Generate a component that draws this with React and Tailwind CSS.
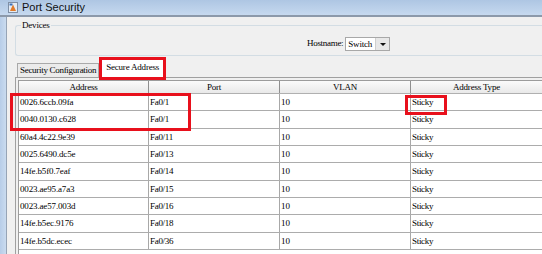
const rows = [
  ["0026.6ccb.09fa", "Fa0/1"],
  ["0040.0130.c628", "Fa0/1"],
  ["60a4.4c22.9e39", "Fa0/11"],
  ["0025.6490.dc5e", "Fa0/13"],
  ["14fe.b5f0.7eaf", "Fa0/14"],
  ["0023.ae95.a7a3", "Fa0/15"],
  ["0023.ae57.003d", "Fa0/16"],
  ["14fe.b5ec.9176", "Fa0/18"],
  ["14fe.b5dc.ecec", "Fa0/36"],
];

const serif = { fontFamily: '"Liberation Serif", serif' };
const cols = "grid grid-cols-[130px_131px_131px_1fr]";

const AppIcon = () => (
  <svg width="10" height="11" viewBox="0 0 10 11">
    <rect x="0.5" y="0.5" width="9" height="10" fill="#e4ebf4" stroke="#7f8fa5" />
    <path d="M2 9 L5 2.5 L8 9 Z" fill="#e07b2a" />
    <rect x="1.5" y="1.5" width="3" height="2" fill="#3a6fb5" />
  </svg>
);

export default function App() {
  return (
    <div
      className="w-[542px] h-[254px] overflow-hidden flex flex-col bg-[#f0f0f0] text-[9px] text-black"
      style={serif}
    >
      {/* title bar */}
      <div className="h-[17px] shrink-0 flex items-center gap-[4px] pl-[8px] pb-[1px] bg-gradient-to-b from-[#aec6e3] to-[#c6d9ef] border-b-2 border-[#8c99aa]">
        <AppIcon />
        <span
          className="text-[11px] leading-[14px] text-[#111]"
          style={{ fontFamily: '"Liberation Sans", sans-serif' }}
        >
          Port Security
        </span>
      </div>

      <div className="flex-1 flex min-h-0">
        <div className="w-[7px] shrink-0 bg-gradient-to-r from-[#b7cde8] to-[#cadbef] border-r border-[#96a4b6]" />

        <div className="flex-1 flex flex-col min-w-0 pl-[8px]">
          {/* Devices group */}
          <div className="relative mt-[8px] h-[31px] shrink-0 border border-r-0 rounded-l-[3px] border-[#d3dde4]">
            <span className="absolute left-[5px] -top-[7px] px-[1px] bg-[#f0f0f0] leading-[12px] tracking-[-0.2px]">
              Devices
            </span>
            <div className="flex items-center pl-[291px] pt-[11px] gap-[2px]">
              <span className="tracking-[-0.3px]">Hostname:</span>
              <div className="flex items-stretch h-[14px] border border-[#a8a8a8] bg-white">
                <span className="pl-[2px] pr-[3px] leading-[12px] tracking-[-0.2px]">Switch</span>
                <div className="w-[14px] bg-[#e8e8e8] border-l border-[#cfcfcf] flex items-center justify-center">
                  <svg width="6" height="3" viewBox="0 0 6 3">
                    <path d="M0 0 H6 L3 3 Z" fill="#111" />
                  </svg>
                </div>
              </div>
            </div>
          </div>

          {/* tabs */}
          <div className="flex items-start h-[21px] shrink-0 pl-[2px]">
            <div className="mt-[7px] h-[14px] px-[2px] border border-b-0 border-[#a9a9a9] bg-[#ebebeb] leading-[12px] tracking-[-0.3px]">
              Security Configuration
            </div>
            <div className="relative z-10 mt-[1px] h-[23px] px-[4px] border-[3px] border-[#e8101c] bg-white leading-[15px] tracking-[-0.2px]">
              Secure Address
            </div>
          </div>

          {/* tab panel */}
          <div className="flex-1 min-h-0 border-t border-l border-[#a0a0a0] pl-[2px] pt-[2px]">
            <div className="h-full bg-white border-l border-t border-[#9c9c9c] relative">
              <div className={`${cols} h-[13px] bg-gradient-to-b from-[#fbfbfb] to-[#e9e9e9] border-b border-[#b0b0b0] leading-[12px] text-center tracking-[-0.2px]`}>
                <div className="border-r border-[#8f8f8f]">Address</div>
                <div className="border-r border-[#8f8f8f]">Port</div>
                <div className="border-r border-[#8f8f8f]">VLAN</div>
                <div>Address Type</div>
              </div>
              {rows.map((r, i) => (
                <div
                  key={i}
                  className={`${cols} h-[17.35px] border-b border-[#acacac] leading-[16px]`}
                >
                  <div className="border-r border-[#a8a8a8] pl-[1px] tracking-[-0.15px]">{r[0]}</div>
                  <div className="border-r border-[#a8a8a8] pl-[1px] tracking-[-0.3px]">{r[1]}</div>
                  <div className="border-r border-[#a8a8a8] pl-[1px]">10</div>
                  <div className="pl-[1px] tracking-[-0.3px]">Sticky</div>
                </div>
              ))}
              {/* highlight boxes */}
              <div className="absolute left-[-9px] top-[12px] w-[181px] h-[38px] border-[3px] border-[#e8101c]" />
              <div className="absolute left-[386px] top-[14px] w-[42px] h-[20px] border-[3px] border-[#e8101c]" />
            </div>
          </div>
        </div>
      </div>
    </div>
  );
}
